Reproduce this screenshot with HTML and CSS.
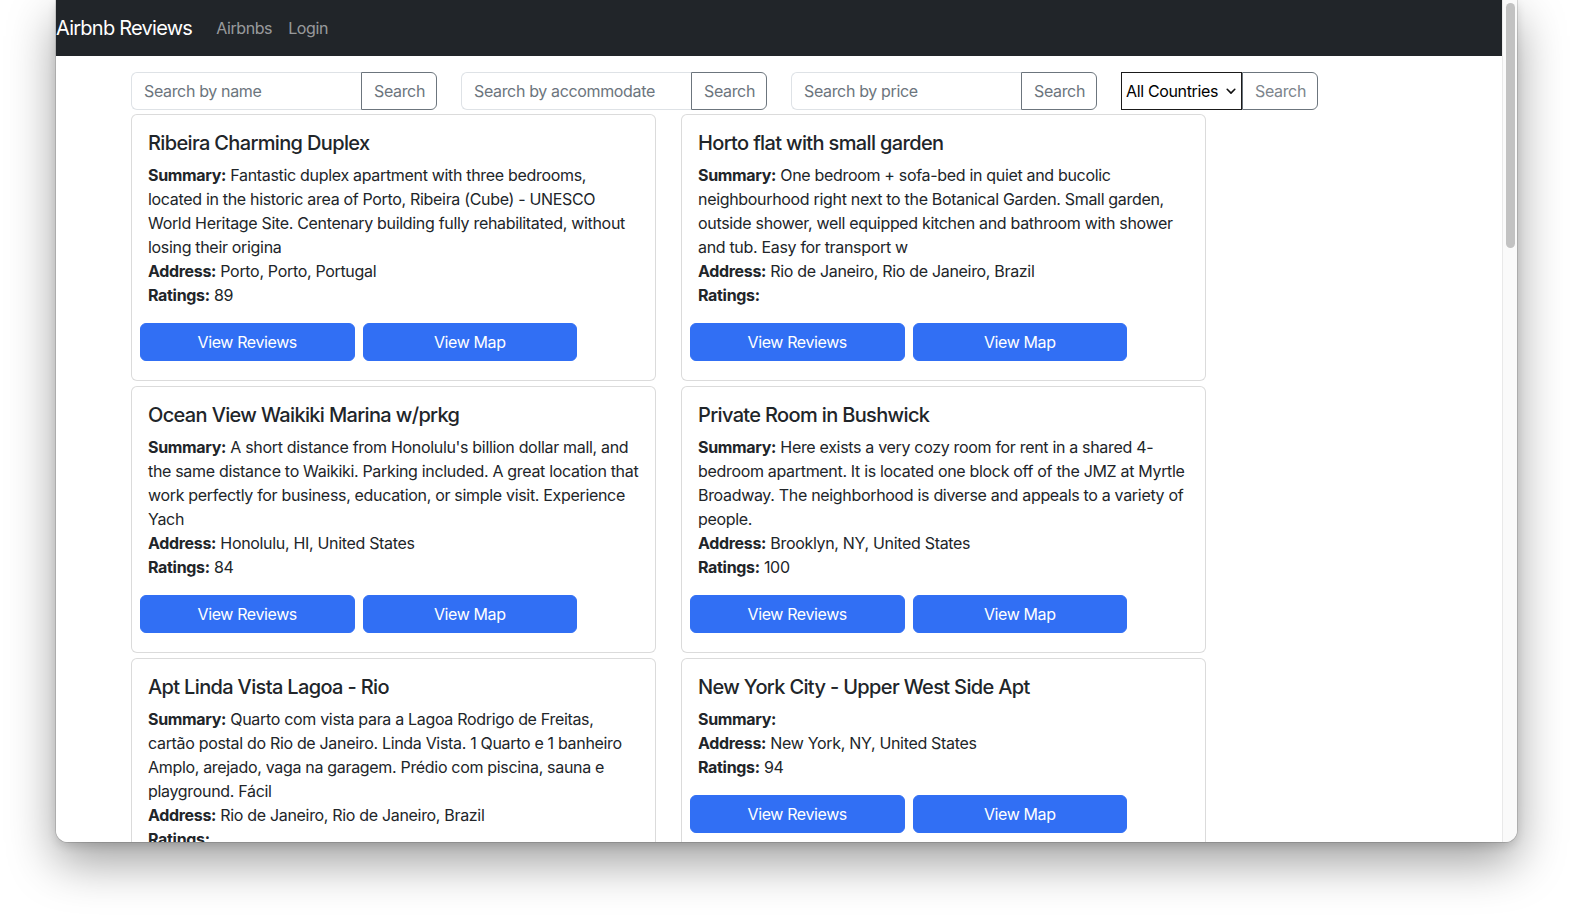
FILE: index.html
```html
<!DOCTYPE html>
<html lang="en">
<head>
<meta charset="utf-8">
<title>Airbnb Reviews</title>
<link rel="stylesheet" href="styles.css">
</head>
<body>
<div class="window">
  <div class="viewport">
    <nav class="navbar">
      <a class="brand" href="#">Airbnb Reviews</a>
      <a class="nav-link" href="#">Airbnbs</a>
      <a class="nav-link" href="#">Login</a>
    </nav>
    <div class="container">
      <div class="search-row">
        <div class="input-group">
          <input class="form-control" type="text" placeholder="Search by name">
          <button class="btn-outline">Search</button>
        </div>
        <div class="input-group">
          <input class="form-control" type="text" placeholder="Search by accommodate">
          <button class="btn-outline">Search</button>
        </div>
        <div class="input-group">
          <input class="form-control" type="text" placeholder="Search by price">
          <button class="btn-outline">Search</button>
        </div>
        <div class="input-group auto">
          <div class="select-wrap">
            <select class="country-select">
              <option>All Countries</option>
            </select>
            <svg class="chevron" width="10" height="7" viewBox="0 0 10 7"><path d="M1.2 1.3 L5 5.1 L8.8 1.3" fill="none" stroke="#111" stroke-width="1.6" stroke-linecap="round" stroke-linejoin="round"/></svg>
          </div>
          <button class="btn-outline light">Search</button>
        </div>
      </div>

      <div class="cards">
        <div class="card">
          <div class="card-body">
            <h5 class="card-title">Ribeira Charming Duplex</h5>
            <p class="card-text"><b>Summary:</b> Fantastic duplex apartment with three bedrooms, located in the historic area of Porto, Ribeira (Cube) - UNESCO World Heritage Site. Centenary building fully rehabilitated, without losing their origina</p>
            <p class="card-text"><b>Address:</b> Porto, Porto, Portugal</p>
            <p class="card-text"><b>Ratings:</b> 89</p>
          </div>
          <div class="card-actions">
            <button class="btn-primary">View Reviews</button>
            <button class="btn-primary">View Map</button>
          </div>
        </div>

        <div class="card">
          <div class="card-body">
            <h5 class="card-title">Horto flat with small garden</h5>
            <p class="card-text"><b>Summary:</b> One bedroom + sofa-bed in quiet and bucolic neighbourhood right next to the Botanical Garden. Small garden, outside shower, well equipped kitchen and bathroom with shower and tub. Easy for transport w</p>
            <p class="card-text"><b>Address:</b> Rio de Janeiro, Rio de Janeiro, Brazil</p>
            <p class="card-text"><b>Ratings:</b> </p>
          </div>
          <div class="card-actions">
            <button class="btn-primary">View Reviews</button>
            <button class="btn-primary">View Map</button>
          </div>
        </div>

        <div class="card">
          <div class="card-body">
            <h5 class="card-title">Ocean View Waikiki Marina w/prkg</h5>
            <p class="card-text"><b>Summary:</b> A short distance from Honolulu's billion dollar mall, and the same distance to Waikiki. Parking included. A great location that work perfectly for business, education, or simple visit. Experience Yach</p>
            <p class="card-text"><b>Address:</b> Honolulu, HI, United States</p>
            <p class="card-text"><b>Ratings:</b> 84</p>
          </div>
          <div class="card-actions">
            <button class="btn-primary">View Reviews</button>
            <button class="btn-primary">View Map</button>
          </div>
        </div>

        <div class="card">
          <div class="card-body">
            <h5 class="card-title">Private Room in Bushwick</h5>
            <p class="card-text"><b>Summary:</b> Here exists a very cozy room for rent in a shared 4-bedroom apartment. It is located one block off of the JMZ at Myrtle Broadway. The neighborhood is diverse and appeals to a variety of people.</p>
            <p class="card-text"><b>Address:</b> Brooklyn, NY, United States</p>
            <p class="card-text"><b>Ratings:</b> 100</p>
          </div>
          <div class="card-actions">
            <button class="btn-primary">View Reviews</button>
            <button class="btn-primary">View Map</button>
          </div>
        </div>

        <div class="card">
          <div class="card-body">
            <h5 class="card-title">Apt Linda Vista Lagoa - Rio</h5>
            <p class="card-text"><b>Summary:</b> Quarto com vista para a Lagoa Rodrigo de Freitas, cartão postal do Rio de Janeiro. Linda Vista. 1 Quarto e 1 banheiro Amplo, arejado, vaga na garagem. Prédio com piscina, sauna e playground. Fácil</p>
            <p class="card-text"><b>Address:</b> Rio de Janeiro, Rio de Janeiro, Brazil</p>
            <p class="card-text"><b>Ratings:</b> </p>
          </div>
          <div class="card-actions">
            <button class="btn-primary">View Reviews</button>
            <button class="btn-primary">View Map</button>
          </div>
        </div>

        <div class="card">
          <div class="card-body">
            <h5 class="card-title">New York City - Upper West Side Apt</h5>
            <p class="card-text"><b>Summary:</b> </p>
            <p class="card-text"><b>Address:</b> New York, NY, United States</p>
            <p class="card-text"><b>Ratings:</b> 94</p>
          </div>
          <div class="card-actions">
            <button class="btn-primary">View Reviews</button>
            <button class="btn-primary">View Map</button>
          </div>
        </div>
      </div>
    </div>
  </div>
  <div class="scrollbar">
    <div class="thumb"></div>
  </div>
</div>
</body>
</html>
```

FILE: styles.css
```css
* { box-sizing: border-box; }

html, body {
  margin: 0;
  padding: 0;
  background: #ffffff;
  height: 916px;
  overflow: hidden;
}

body {
  font-family: Inter, "Noto Sans", "Liberation Sans", sans-serif;
  font-size: 16px;
  line-height: 1.5;
  color: #212529;
  letter-spacing: -0.35px;
}

.window {
  margin-left: 56px;
  width: 1461px;
  height: 842px;
  display: flex;
  overflow: hidden;
  background: #fff;
  border-radius: 0 0 12px 12px;
  box-shadow: 0 0 0 1px rgba(0,0,0,0.12), 0 20px 48px rgba(0,0,0,0.38), 0 4px 10px rgba(0,0,0,0.12);
}

.viewport {
  flex: 1;
  overflow: hidden;
  background: #fff;
}

.navbar {
  height: 56px;
  background: #212529;
  display: flex;
  align-items: center;
  padding: 8px 0;
}

.brand {
  color: #fff;
  font-size: 20px;
  line-height: 30px;
  text-decoration: none;
  margin-right: 16px;
  letter-spacing: -0.75px;
}

.nav-link {
  color: rgba(255,255,255,0.55);
  text-decoration: none;
  padding: 8px;
  line-height: 24px;
  letter-spacing: -0.4px;
}

.container {
  width: 1320px;
  margin: 0 auto;
  padding: 0 12px;
}

.search-row {
  margin-top: 16px;
  display: flex;
  gap: 24px;
}

.input-group {
  display: flex;
  width: 306px;
  height: 38px;
}

.input-group.auto { width: auto; }

.form-control {
  flex: 1;
  min-width: 0;
  height: 38px;
  padding: 6px 12px;
  font: inherit;
  letter-spacing: -0.35px;
  color: #212529;
  border: 1px solid #dee2e6;
  border-right: none;
  border-radius: 6px 0 0 6px;
  outline: none;
  background: #fff;
}

.form-control::placeholder { color: #6c757d; opacity: 1; }

.btn-outline {
  height: 38px;
  width: 76px;
  padding: 6px 12px;
  font: inherit;
  letter-spacing: -0.35px;
  color: #6c757d;
  background: #fff;
  border: 1px solid #6c757d;
  border-radius: 0 6px 6px 0;
  cursor: pointer;
}

.btn-outline.light { color: #7d858c; border-color: #6c757d; }

.select-wrap {
  position: relative;
  width: 121px;
  height: 38px;
}

.country-select {
  appearance: none;
  -webkit-appearance: none;
  width: 121px;
  height: 38px;
  margin: 0;
  padding: 0 18px 0 4px;
  font: inherit;
  letter-spacing: -0.35px;
  color: #000;
  background: #fff;
  border: 1px solid #1a1a1a;
  border-radius: 0;
  outline: none;
}

.chevron {
  position: absolute;
  right: 6px;
  top: 16px;
  pointer-events: none;
}

.cards {
  margin-top: 4px;
  display: grid;
  grid-template-columns: 525px 525px;
  column-gap: 25px;
  row-gap: 5px;
}

.card {
  border: 1px solid rgba(0,0,0,0.14);
  border-radius: 6px;
  background: #fff;
  display: flex;
  flex-direction: column;
}

.card-body {
  padding: 16px 16px 16px;
}

.card-title {
  margin: 0 0 8px;
  font-size: 20px;
  font-weight: 500;
  line-height: 1.2;
  letter-spacing: -0.65px;
}

.card-text {
  margin: 0;
  letter-spacing: -0.32px;
}

.card-text b { font-weight: 700; }

.card-actions {
  display: flex;
  gap: 8px;
  padding: 0 8px 19px;
}

.btn-primary {
  width: 214.5px;
  height: 38px;
  padding: 6px 12px;
  font: inherit;
  letter-spacing: -0.4px;
  color: #fff;
  background: #316ff4;
  border: 1px solid #316ff4;
  border-radius: 6px;
  cursor: pointer;
}

.scrollbar {
  width: 15px;
  flex: none;
  background: #fafafa;
  border-left: 1px solid #e9e9e9;
  padding: 3px 2px 0 3px;
}

.thumb {
  width: 9px;
  height: 245px;
  background: #c2c2c2;
  border-radius: 5px;
}
```
